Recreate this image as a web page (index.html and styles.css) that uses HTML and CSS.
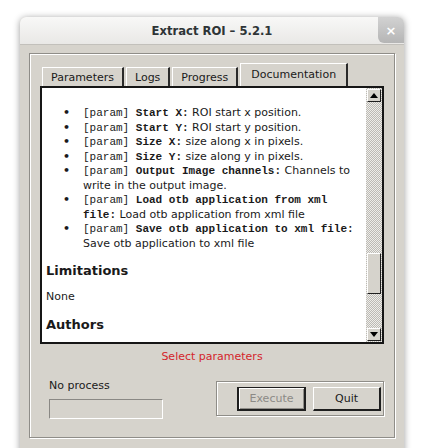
FILE: index.html
```html
<!DOCTYPE html>
<html lang="en">
<head>
  <meta charset="UTF-8" />
  <title>Extract ROI - 5.2.1</title>
  <link rel="stylesheet" href="styles.css">
</head>
<body>
  <div class="window">
    <div class="titlebar">
      <span></span>
      <h1>Extract ROI – 5.2.1</h1>
      <span class="close">×</span>
    </div>
    <div class="window-body">
      <div class="frame">
        <div class="tabs">
          <span class="tab">Parameters</span>
          <span class="tab">Logs</span>
          <span class="tab">Progress</span>
          <span class="tab active">Documentation</span>
        </div>
        <div class="docview">
          <div class="doc">
            <ul>
              <li><span><code>[param] </code><code class="b">Start X:</code> ROI start x position.</span></li>
              <li><span><code>[param] </code><code class="b">Start Y:</code> ROI start y position.</span></li>
              <li><span><code>[param] </code><code class="b">Size X:</code> size along x in pixels.</span></li>
              <li><span><code>[param] </code><code class="b">Size Y:</code> size along y in pixels.</span></li>
              <li><span><code>[param] </code><code class="b">Output Image channels:</code> Channels to<br>write in the output image.</span></li>
              <li><span><code>[param] </code><code class="b">Load otb application from xml<br>file:</code> Load otb application from xml file</span></li>
              <li><span><code>[param] </code><code class="b">Save otb application to xml file:</code><br>Save otb application to xml file</span></li>
            </ul>
            <h3>Limitations</h3>
            <p>None</p>
            <h3 class="authors">Authors</h3>
          </div>
          <div class="scrollbar">
            <span class="arrow up"></span>
            <span class="thumb"></span>
            <span class="arrow down"></span>
          </div>
        </div>
        <div class="status">Select parameters</div>
        <div class="bottom-row">
          <div class="process">
            <div>No process</div>
            <div class="progress"></div>
          </div>
          <div class="actions">
            <button class="btn default" disabled>Execute</button>
            <button class="btn">Quit</button>
          </div>
        </div>
      </div>
    </div>
  </div>
</body>
</html>
```

FILE: styles.css
```css
* { box-sizing: border-box; }
body {
  margin: 0; padding: 17px 0 0 20px;
  background: #ffffff;
  font-family: "DejaVu Sans", sans-serif;
  font-size: 11px; color: #1a1a1a;
  overflow: hidden; height: 448px;
}
.window {
  width: 384px;
  border-radius: 6px 6px 0 0;
  box-shadow: 0 1px 7px rgba(0,0,0,0.4);
  background: #d6d3cc;
}
.titlebar {
  display: grid; grid-template-columns: 26px 1fr 26px;
  height: 28px;
  background: linear-gradient(#f8f8f7, #e9e8e6);
  border-radius: 6px 6px 0 0;
  border-bottom: 1px solid #c2c0bb;
}
.titlebar h1 {
  margin: 0; align-self: center; text-align: center;
  font-size: 11.6px; font-weight: bold; color: #2e3436;
}
.close {
  height: 26px;
  background: linear-gradient(#d2d2d2, #b5b5b5);
  border-radius: 0 6px 0 6px;
  color: #ffffff; font-weight: bold; font-size: 13px;
  display: flex; justify-content: center; align-items: center;
}
.window-body { padding: 8px 9px 0 9px; height: 412px; }
.frame {
  height: 385px;
  border: 1px solid #8f8d88;
  box-shadow: inset 1px 1px #ffffff, 1px 1px #ffffff;
  padding: 10px 10px 0 10px;
}
.tabs {
  display: flex; align-items: flex-end; gap: 2px;
  height: 22px; padding-left: 2px;
}
.tab {
  height: 19px; padding: 0 8px;
  display: flex; align-items: center;
  border-left: 1px solid #ffffff; border-top: 1px solid #ffffff;
  border-right: 2px solid #2a2a2a;
}
.tab.active { height: 23px; padding: 0 10px 2px 10px; }
.docview {
  display: flex;
  height: 258px;
  border: 2px solid #161616;
  background: #ffffff;
}
.doc { flex: 1; padding-left: 4px; overflow: hidden; }
ul { margin: 18px 0 0 0; padding-left: 17px; list-style: none; }
li {
  display: grid; grid-template-columns: 20px 1fr;
  line-height: 14.5px; white-space: nowrap;
}
li::before { content: "•"; font-weight: bold; }
code { font-family: "Liberation Mono", monospace; font-size: 11px; }
code.b { font-weight: bold; }
h3 { margin: 11px 0 0 0; font-size: 13px; line-height: 18px; }
h3.authors { margin-top: 12px; }
p { margin: 10px 0 0 0; line-height: 14px; }
.scrollbar {
  width: 16px;
  display: flex; flex-direction: column;
  padding: 1px;
  background: repeating-conic-gradient(#bcbab5 0 25%, #eeede9 0 50%) 0 0 / 2px 2px;
}
.arrow {
  height: 13px;
  background: #d6d3cc;
  border: 1px solid; border-color: #ffffff #1e1e1e #1e1e1e #ffffff;
  display: flex; justify-content: center; align-items: center;
}
.arrow::after {
  content: ""; border-left: 4px solid transparent; border-right: 4px solid transparent;
}
.up::after { border-bottom: 5px solid #000000; }
.down { margin-top: auto; }
.down::after { border-top: 5px solid #000000; }
.thumb {
  height: 41px; margin-top: 151px;
  background: #d6d3cc;
  border: 1px solid; border-color: #ffffff #1e1e1e #1e1e1e #ffffff;
}
.status {
  margin-top: 6px; line-height: 14px;
  text-align: center; color: #d4252b;
}
.bottom-row {
  display: flex; justify-content: space-between; align-items: flex-start;
  margin-top: 15px;
}
.process { margin-left: 9px; line-height: 14px; }
.progress {
  width: 114px; height: 20px; margin-top: 6px;
  border: 1px solid; border-color: #8a8884 #ffffff #ffffff #8a8884;
}
.actions {
  display: flex; justify-content: flex-end; gap: 7px;
  width: 168px; height: 35px; margin-top: 2px;
  padding: 5px 2px 0 0;
  border: 1px solid #8f8d88;
  box-shadow: inset 1px 1px #ffffff, 1px 1px #ffffff;
}
.btn {
  width: 68px; height: 24px; padding: 0;
  font-family: "DejaVu Sans", sans-serif; font-size: 11px; color: #1a1a1a;
  background: #d6d3cc;
  border: 1px solid; border-width: 1px 2px 2px 1px;
  border-color: #ffffff #1e1e1e #1e1e1e #ffffff;
}
.btn.default {
  width: 69px; color: #8c8a86;
  border: 1px solid #1e1e1e; border-width: 1px 2px 2px 2px;
  box-shadow: inset 1px 1px #ffffff, inset -1px -1px #8f8d88;
}
```
